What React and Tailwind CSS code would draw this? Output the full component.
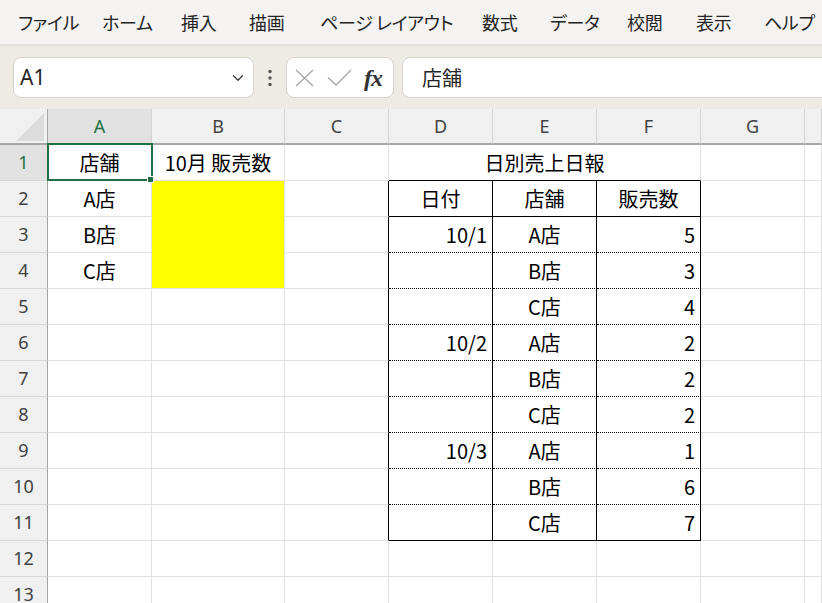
import React from 'react';
import { ChevronDown } from 'lucide-react';

const menus = [
    { label: 'ファイル', w: 'w-[84px]' },
    { label: 'ホーム', w: 'w-[79px]' },
    { label: '挿入', w: 'w-[68px]' },
    { label: '描画', w: 'w-[71px]' },
    { label: 'ページ レイアウト', w: 'w-[162px]' },
    { label: '数式', w: 'w-[68px]' },
    { label: 'データ', w: 'w-[77px]' },
    { label: '校閲', w: 'w-[69px]' },
    { label: '表示', w: 'w-[68px]' },
    { label: 'ヘルプ', w: 'w-[70px]' },
];

const cols = ['A', 'B', 'C', 'D', 'E', 'F', 'G', ''];

// sales report table (D2:F11)
const report = [
    ['日付', '店舗', '販売数'],
    ['10/1', 'A店', '5'],
    ['', 'B店', '3'],
    ['', 'C店', '4'],
    ['10/2', 'A店', '2'],
    ['', 'B店', '2'],
    ['', 'C店', '2'],
    ['10/3', 'A店', '1'],
    ['', 'B店', '6'],
    ['', 'C店', '7'],
];

const leftCol = ['店舗', 'A店', 'B店', 'C店'];

const cellFont = "font-['Noto_Sans_CJK_JP',sans-serif] text-[20px] text-black";

const Cell = ({ children, className = '', align = 'center' }) => {
    const a = align === 'right' ? 'justify-end pr-[5px]' : 'justify-center';
    return (
        <div className={`h-[36px] border-r border-b flex items-center leading-none overflow-visible whitespace-nowrap ${a} ${cellFont} ${className}`}>
            {children}
        </div>
    );
};

const rowCells = (r) => {
    const cells = [];
    // A
    if (r === 1) {
        cells.push(
            <Cell key="a" className="relative border-r-[#e1e1e1] border-b-[#e1e1e1] z-10">
                店舗
                <div className="absolute left-[-1px] top-[-2px] w-[106px] h-[38px] border-2 border-[#1f7145]"></div>
                <div className="absolute left-[99px] top-[31px] w-[7px] h-[7px] bg-[#1f7145] border border-white"></div>
            </Cell>
        );
    } else {
        cells.push(
            <Cell key="a" className="border-r-[#e1e1e1] border-b-[#e1e1e1]">{leftCol[r - 1] || ''}</Cell>
        );
    }
    // B
    if (r === 1) {
        cells.push(<Cell key="b" className="border-r-[#e1e1e1] border-b-[#e1e1e1]">10月 販売数</Cell>);
    } else if (r === 2 || r === 3) {
        cells.push(<Cell key="b" className="bg-[#ffff00] border-r-[#e1e1e1] border-b-[#ffff00]" />);
    } else if (r === 4) {
        cells.push(<Cell key="b" className="bg-[#ffff00] border-r-[#e1e1e1] border-b-[#e1e1e1]" />);
    } else {
        cells.push(<Cell key="b" className="border-r-[#e1e1e1] border-b-[#e1e1e1]" />);
    }
    // C
    const inTable = r >= 2 && r <= 11;
    cells.push(
        <Cell key="c" className={inTable ? 'border-r-black border-b-[#e1e1e1]' : 'border-r-[#e1e1e1] border-b-[#e1e1e1]'} />
    );
    // D-F
    if (r === 1) {
        cells.push(
            <Cell key="d" className="col-span-3 border-r-[#e1e1e1] border-b-black">日別売上日報</Cell>
        );
    } else if (inTable) {
        const row = report[r - 2];
        const bottom = r === 2 || r === 11
            ? 'border-b-black'
            : 'border-b-black [border-bottom-style:dotted]';
        row.forEach((v, i) => {
            const align = r === 2 || i === 1 ? 'center' : 'right';
            cells.push(
                <Cell key={'t' + i} align={align} className={`border-r-black ${bottom}`}>{v}</Cell>
            );
        });
    } else {
        ['d', 'e', 'f'].forEach((k) =>
            cells.push(<Cell key={k} className="border-r-[#e1e1e1] border-b-[#e1e1e1]" />)
        );
    }
    // G, H
    cells.push(<Cell key="g" className="border-r-[#e1e1e1] border-b-[#e1e1e1]" />);
    cells.push(<Cell key="h" className="border-r-[#e1e1e1] border-b-[#e1e1e1]" />);
    return cells;
};

const App = () => {
    const rows = Array.from({ length: 13 }, (_, i) => i + 1);
    return (
        <div className="w-[822px] h-[603px] overflow-hidden bg-white select-none">
            {/* menu bar */}
            <div className="h-[45px] bg-[#f4f3f1] flex items-center pl-[18px] border-b border-[#e2dfda] shadow-[0_1px_2px_rgba(0,0,0,0.06)] relative z-20">
                {menus.map((m) => (
                    <div
                        key={m.label}
                        className={`${m.w} shrink-0 text-[18px] text-[#242424] font-['Noto_Sans_CJK_JP',sans-serif] [font-feature-settings:'palt'] tracking-[-0.3px] whitespace-nowrap`}
                    >
                        {m.label}
                    </div>
                ))}
            </div>

            {/* formula bar */}
            <div className="h-[64px] bg-[#eeebe5] flex items-start pt-[12px] pl-[13px]">
                <div className="w-[241px] h-[41px] shrink-0 bg-white rounded-[8px] border border-[#d6d3ce] flex items-center justify-between pl-[6px] pr-[6px]">
                    <span className="text-[21px] text-[#242424] font-['Noto_Sans',sans-serif]">A1</span>
                    <ChevronDown size={18} strokeWidth={1.6} className="text-[#333]" />
                </div>
                <div className="w-[32px] h-[41px] shrink-0 flex items-center justify-center">
                    <svg width="4" height="18" viewBox="0 0 4 18">
                        <circle cx="2" cy="2.5" r="1.7" fill="#555" />
                        <circle cx="2" cy="9" r="1.7" fill="#555" />
                        <circle cx="2" cy="15.5" r="1.7" fill="#555" />
                    </svg>
                </div>
                <div className="w-[108px] h-[41px] shrink-0 bg-white rounded-[8px] border border-[#d6d3ce] flex items-center pl-[8px]">
                    <svg width="19" height="18" viewBox="0 0 19 18" className="shrink-0">
                        <path d="M1 1 L18 17 M18 1 L1 17" stroke="#a8a8a8" strokeWidth="1.4" fill="none" />
                    </svg>
                    <svg width="25" height="17" viewBox="0 0 25 17" className="ml-[13px] shrink-0">
                        <path d="M1 8.5 L9 16 L24 1" stroke="#a8a8a8" strokeWidth="1.4" fill="none" />
                    </svg>
                    <span className="ml-[12px] text-[24px] leading-none italic font-bold text-[#333] font-['Liberation_Serif',serif] tracking-[-1px]">fx</span>
                </div>
                <div className="ml-[8px] w-[440px] h-[41px] shrink-0 bg-white rounded-[8px] border border-[#d6d3ce] flex items-center pl-[19px]">
                    <span className="text-[20px] text-[#242424] font-['Noto_Sans_CJK_JP',sans-serif]">店舗</span>
                </div>
            </div>

            {/* sheet grid */}
            <div className="grid grid-cols-[48px_104px_133px_104px_104px_104px_104px_104px_1fr]">
                {/* column headers */}
                <div className="h-[36px] bg-[#f0f0f0] border-r border-b-2 border-r-[#a6a6a6] border-b-[#a6a6a6] relative">
                    <div className="absolute right-[3px] bottom-[2px] w-0 h-0 border-l-[28px] border-t-[28px] border-l-transparent border-t-transparent border-b-0 border-r-0 [border-bottom:28px_solid_#dcdcdc]"></div>
                </div>
                {cols.map((c) => (
                    <div
                        key={'h' + c}
                        className={`h-[36px] border-r border-b-2 border-r-[#d4d4d4] border-b-[#a6a6a6] flex items-center justify-center text-[18px] font-['Noto_Sans',sans-serif] ${c === 'A' ? 'bg-[#e1e1e1] text-[#1f7145]' : 'bg-[#f0f0f0] text-[#424242]'}`}
                    >
                        {c}
                    </div>
                ))}

                {rows.map((r) => (
                    <React.Fragment key={r}>
                        <div
                            className={`h-[36px] border-r border-b border-r-[#a6a6a6] border-b-[#d8d8d8] flex items-center justify-center text-[18px] font-['Noto_Sans',sans-serif] ${r === 1 ? 'bg-[#e1e1e1] text-[#1f7145]' : 'bg-[#f0f0f0] text-[#424242]'}`}
                        >
                            {r}
                        </div>
                        {rowCells(r)}
                    </React.Fragment>
                ))}
            </div>
        </div>
    );
};

export default App;
